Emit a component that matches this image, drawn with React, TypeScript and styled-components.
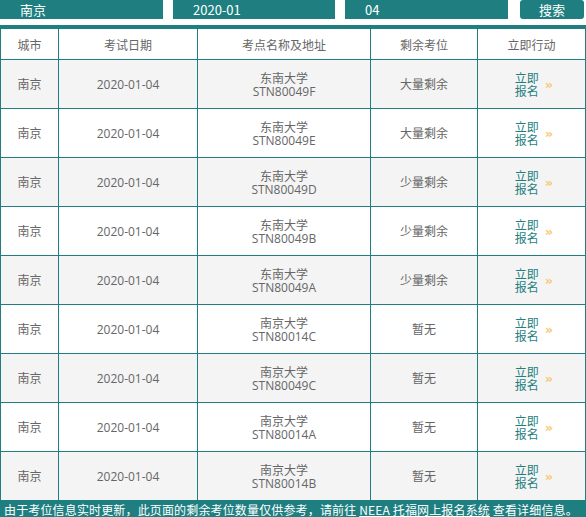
import React from "react";
import styled, { createGlobalStyle } from "styled-components";

const TEAL = "#1f7f80";

const Global = createGlobalStyle`
  html, body { margin: 0; padding: 0; background: #fff; }
  body {
    font-family: "Noto Sans CJK SC", "Noto Sans", sans-serif;
    font-size: 12px;
    color: #666;
  }
`;

const Page = styled.div`
  width: 586px;
  overflow: hidden;
`;

const SearchBar = styled.div`
  display: grid;
  grid-template-columns: 163px 162px 163px 66px;
  column-gap: 10px;
  height: 19px;
  margin-bottom: 6px;
  & > :last-child { margin-left: 2px; }
`;

const Field = styled.div`
  background: ${TEAL};
  color: #fff;
  font-size: 13px;
  line-height: 19px;
  padding-left: 20px;
  white-space: nowrap;
`;

const SearchButton = styled.button`
  all: unset;
  background: ${TEAL};
  color: #fff;
  font-size: 13px;
  line-height: 19px;
  text-align: center;
  border-radius: 3px;
  font-family: "Noto Sans CJK SC", sans-serif;
`;

const Table = styled.table`
  width: 585px;
  border-collapse: collapse;
  border-top: 4px solid ${TEAL};
  table-layout: fixed;
`;

const HeadCell = styled.th`
  height: 30px;
  padding: 0;
  font-weight: normal;
  color: #666;
  text-align: center;
  border: 1px solid ${TEAL};
  background: #fff;
`;

const Row = styled.tr<{ $alt: boolean }>`
  background: ${(p) => (p.$alt ? "#f4f4f4" : "#fff")};
`;

const Cell = styled.td`
  height: 49px;
  box-sizing: border-box;
  padding: 1px 0 0;
  text-align: center;
  border: 1px solid ${TEAL};
  line-height: 12px;
  color: #666;
  font-family: "Open Sans", "Noto Sans CJK SC", sans-serif;
`;

const Place = styled.div`
  line-height: 13px;
`;

const Action = styled.div`
  display: flex;
  align-items: center;
  justify-content: center;
  gap: 6px;
  padding-left: 5px;
`;

const ActionLink = styled.a`
  width: 24px;
  color: ${TEAL};
  font-size: 12px;
  line-height: 13px;
  text-align: left;
  text-decoration: none;
`;

const Chevron = styled.span`
  color: #f6c976;
  font-weight: bold;
  font-size: 13px;
  font-family: "DejaVu Sans", sans-serif;
`;

const Footer = styled.div`
  background: ${TEAL};
  color: #fff;
  font-size: 12px;
  line-height: 16px;
  letter-spacing: 0.15px;
  padding: 1px 0 4px 4px;
  white-space: nowrap;
`;

const FooterLink = styled.span`
  text-decoration: underline;
`;

const rows = [
  ["东南大学", "STN80049F", "大量剩余"],
  ["东南大学", "STN80049E", "大量剩余"],
  ["东南大学", "STN80049D", "少量剩余"],
  ["东南大学", "STN80049B", "少量剩余"],
  ["东南大学", "STN80049A", "少量剩余"],
  ["南京大学", "STN80014C", "暂无"],
  ["南京大学", "STN80049C", "暂无"],
  ["南京大学", "STN80014A", "暂无"],
  ["南京大学", "STN80014B", "暂无"],
];

export default function App() {
  return (
    <Page>
      <Global />
      <SearchBar>
        <Field>南京</Field>
        <Field>2020-01</Field>
        <Field>04</Field>
        <SearchButton>搜索</SearchButton>
      </SearchBar>
      <Table>
        <colgroup>
          <col style={{ width: 58 }} />
          <col style={{ width: 139 }} />
          <col style={{ width: 173 }} />
          <col style={{ width: 107 }} />
          <col style={{ width: 108 }} />
        </colgroup>
        <thead>
          <tr>
            <HeadCell>城市</HeadCell>
            <HeadCell>考试日期</HeadCell>
            <HeadCell>考点名称及地址</HeadCell>
            <HeadCell>剩余考位</HeadCell>
            <HeadCell>立即行动</HeadCell>
          </tr>
        </thead>
        <tbody>
          {rows.map(([name, code, left], i) => (
            <Row key={code + i} $alt={i % 2 === 0}>
              <Cell>南京</Cell>
              <Cell>2020-01-04</Cell>
              <Cell>
                <Place>
                  {name}
                  <br />
                  {code}
                </Place>
              </Cell>
              <Cell>{left}</Cell>
              <Cell>
                <Action>
                  <ActionLink>立即报名</ActionLink>
                  <Chevron>»</Chevron>
                </Action>
              </Cell>
            </Row>
          ))}
        </tbody>
      </Table>
      <Footer>
        由于考位信息实时更新，此页面的剩余考位数量仅供参考，请前往 <FooterLink>NEEA 托福网上报名系统</FooterLink> 查看详细信息。
      </Footer>
    </Page>
  );
}
